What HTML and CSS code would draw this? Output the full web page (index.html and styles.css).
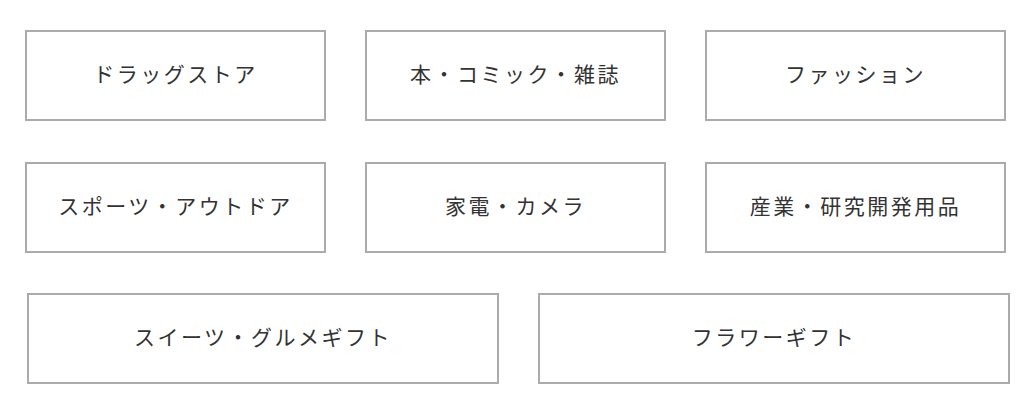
FILE: index.html
```html
<!DOCTYPE html>
<html lang="ja">
  <head>
    <meta charset="UTF-8" />
    <meta name="viewport" content="width=device-width, initial-scale=1.0" />
    <title>カテゴリ</title>
    <link rel="stylesheet" href="styles.css">
  </head>
  <body>
    <div class="categories">
      <div class="row">
        <a class="cat" href="#">ドラッグストア</a>
        <a class="cat" href="#">本・コミック・雑誌</a>
        <a class="cat" href="#">ファッション</a>
      </div>
      <div class="row">
        <a class="cat" href="#">スポーツ・アウトドア</a>
        <a class="cat" href="#">家電・カメラ</a>
        <a class="cat" href="#">産業・研究開発用品</a>
      </div>
      <div class="row row-wide">
        <a class="cat" href="#">スイーツ・グルメギフト</a>
        <a class="cat" href="#">フラワーギフト</a>
      </div>
    </div>
  </body>
</html>
```

FILE: styles.css
```css
* {
  margin: 0;
  padding: 0;
  box-sizing: border-box;
}
body {
  background: #fff;
  font-family: "Noto Sans CJK JP", "Noto Sans", sans-serif;
}
.categories {
  display: flex;
  flex-direction: column;
  gap: 41px;
  padding: 30px 0 0 25px;
}
.row {
  display: flex;
  gap: 39px;
}
.cat {
  display: flex;
  align-items: center;
  justify-content: center;
  width: 301px;
  height: 91px;
  padding-bottom: 5px;
  border: 2px solid #ababab;
  color: #333;
  font-size: 21px;
  letter-spacing: 2.5px;
  text-decoration: none;
}
.row-wide {
  margin-top: -1px;
  margin-left: 2px;
}
.row-wide .cat {
  width: 472px;
}
```
